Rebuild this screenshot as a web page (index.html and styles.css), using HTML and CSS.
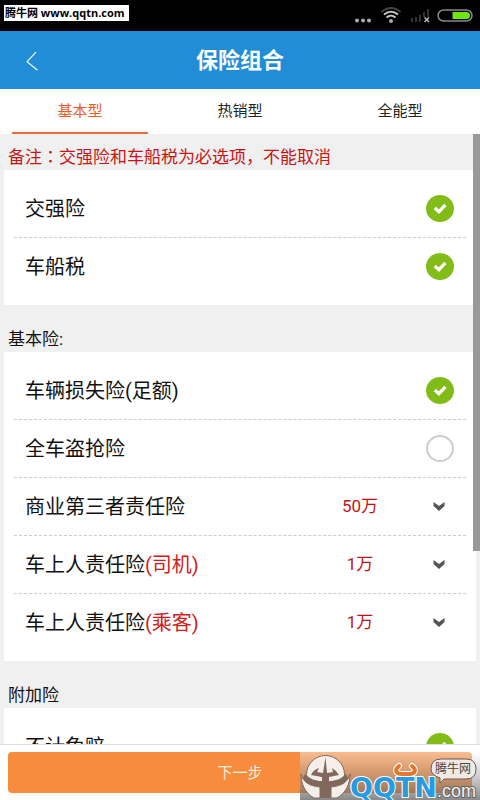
FILE: index.html
```html
<!DOCTYPE html>
<html lang="zh-CN">
<head>
<meta charset="utf-8">
<meta name="viewport" content="width=device-width, initial-scale=1">
<title>保险组合</title>
<link rel="stylesheet" href="styles.css">
</head>
<body>
<svg class="defs" width="0" height="0" aria-hidden="true">
  <symbol id="tick" viewBox="0 0 28 28"><path d="M8.600 13.500 12.900 17.300 19.600 10.300" fill="none" stroke="#fff" stroke-width="3.400"/></symbol>
  <symbol id="chevron" viewBox="0 0 12 10"><path d="M.5 0 6 4 11.500 0V4L6 9 .5 4Z" fill="#555"/></symbol>
</svg>
<div class="statusbar">
  <span class="source">腾牛网 www.qqtn.com</span>
  <svg class="status-icons" width="120" height="24" viewBox="0 0 120 24" aria-hidden="true">
    <g fill="#aaa"><circle cx="2" cy="15.500" r="2"/><circle cx="8" cy="15.500" r="2"/><circle cx="14" cy="15.500" r="2"/><circle cx="36" cy="16" r="2"/></g>
    <g fill="none" stroke="#ccc" stroke-width="1.800"><path d="M31.500 12.500Q36 8.700 40.500 12.500"/><path d="M29 9.500Q36 3.700 43 9.500"/><path d="M26.500 7Q36-1 45.500 7" stroke="#444"/></g>
    <path d="M56 13h2v4h-2zM60 12h2v5h-2zM64 10h2v7h-2zM68 7h2v5h-2zM72 4h2v8h-2z" fill="#333"/>
    <path d="m69.500 12.500 4.500 4.500m0-4.500L69.500 17" stroke="#bbb" stroke-width="1.500"/>
    <rect x="83" y="5" width="34" height="11" rx="5.500" fill="none" stroke="#888" stroke-width="1.500"/>
    <path d="M97.500 7h14a3.500 3.500 0 0 1 0 7h-14z" fill="#6de614"/>
  </svg>
</div>
<header class="titlebar">
  <a class="back" href="#" aria-label="返回"><svg width="12" height="20" viewBox="0 0 12 20"><path d="M10 1.200 1 10.700l10.500 8.600" fill="none" stroke="#fff" stroke-width="1.100"/></svg></a>
  <h1>保险组合</h1>
</header>
<nav class="tabs">
  <a class="tab active" href="#">基本型</a>
  <a class="tab" href="#">热销型</a>
  <a class="tab" href="#">全能型</a>
</nav>
<main class="content">
  <p class="heading note">备注<span class="colon" lang="zh-TW">：</span>交强险和车船税为必选项，不能取消</p>
  <section class="card">
    <div class="row"><label for="c1">交强险</label><span class="check"><input type="checkbox" id="c1" checked><svg><use href="#tick"/></svg></span></div>
    <div class="row"><label for="c2">车船税</label><span class="check"><input type="checkbox" id="c2" checked><svg><use href="#tick"/></svg></span></div>
  </section>
  <h2 class="heading">基本险:</h2>
  <section class="card">
    <div class="row"><label for="c3">车辆损失险(足额)</label><span class="check"><input type="checkbox" id="c3" checked><svg><use href="#tick"/></svg></span></div>
    <div class="row"><label for="c4">全车盗抢险</label><span class="check"><input type="checkbox" id="c4"><svg><use href="#tick"/></svg></span></div>
    <div class="row"><label for="s1">商业第三者责任险</label><span class="amount"><select id="s1"><option>50万</option></select><svg><use href="#chevron"/></svg></span></div>
    <div class="row"><label for="s2">车上人责任险<em>(司机)</em></label><span class="amount"><select id="s2"><option>1万</option></select><svg><use href="#chevron"/></svg></span></div>
    <div class="row"><label for="s3">车上人责任险<em>(乘客)</em></label><span class="amount"><select id="s3"><option>1万</option></select><svg><use href="#chevron"/></svg></span></div>
  </section>
  <h2 class="heading">附加险</h2>
  <section class="card">
    <div class="row"><label for="c5">不计免赔</label><span class="check"><input type="checkbox" id="c5" checked><svg><use href="#tick"/></svg></span></div>
  </section>
  <div class="scrollbar"></div>
</main>
<footer class="actions">
  <button type="button">下一步</button>
  <svg class="watermark" width="180" height="48" viewBox="0 0 180 48" aria-hidden="true">
    <defs>
      <linearGradient id="shade" x1="0" y1="0" x2="0" y2="1"><stop offset="0" stop-color="#fff" stop-opacity=".42"/><stop offset=".4" stop-color="#aaa" stop-opacity=".45"/><stop offset="1" stop-color="#555" stop-opacity=".7"/></linearGradient>
    </defs>
    <path d="M0 0h180v48H0z" fill="url(#shade)"/>
    <circle cx="25.500" cy="22.500" r="19" fill="#f6eee9" stroke="#80685c"/>
    <path d="M5 22c5 5 11 7 16 7h9c5 0 11-2 16-7l2 4c-3 6-8 8-17 9v11H20V35C11 34 6 32 3 26Z" fill="#80685c"/>
    <path d="M1 22c2 8 8 12 19 13v11h-6C5 41 1 32 1 22ZM50 22c-2 8-8 12-19 13v11h6c9-5 13-14 13-24Z" fill="#f6eee9" stroke="#80685c"/>
    <path d="m25.500 5 1.500 16 6-1-1-4q5 3 7 7l-10 2v5h-7v-5l-11-2q2-5 8-7l-2 4 6 1Z" fill="#80685c"/>
    <g fill="none" stroke-linecap="round" transform="translate(-1 -3)"><path d="M100 17c-5 4-3 8 3 8h7c6 0 8-4 3-8" stroke="#fff" stroke-width="6"/><path d="M100 17c-5 4-3 8 3 8h7c6 0 8-4 3-8" stroke="#e8762a" stroke-width="4"/></g>
    <text class="wm-name" x="50" y="45">QQTN</text>
    <text class="wm-com" x="137" y="45">.com</text>
    <path d="M141 7h25q10 0 10 10t-10 10h-22l-4 4v-5q-9-3-9-9 0-10 10-10Z" fill="#f2e9e4" stroke="#6b5b54"/>
    <text class="wm-cn" x="135" y="21">腾牛网</text>
  </svg>
</footer>
</body>
</html>
```
FILE: styles.css
```css
* { box-sizing: border-box; }
body {
  margin: 0;
  height: 100vh;
  display: flex;
  flex-direction: column;
  overflow: hidden;
  background: #fff;
  color: #111;
  font-family: Roboto, "Noto Sans CJK SC", sans-serif;
}
.defs { position: absolute; }
a { color: inherit; text-decoration: none; }
.statusbar {
  flex: none;
  height: 31px;
  padding: 5px 5px 0 4px;
  display: flex;
  justify-content: space-between;
  align-items: flex-start;
  background: #000;
}
.source {
  height: 16px;
  padding: 0 4px 0 1px;
  background: #fff;
  color: #000;
  font: bold 11px/16px "Open Sans", "Noto Sans CJK SC", sans-serif;
}
.titlebar {
  flex: none;
  height: 58px;
  padding-top: 2px;
  display: grid;
  grid-template-columns: 60px 1fr 60px;
  align-items: center;
  background: #218dd6;
  color: #fff;
}
.back { padding-left: 26px; display: flex; }
h1 { margin: 0; text-align: center; font-size: 22px; line-height: 32px; font-weight: 700; }
.tabs {
  flex: none;
  height: 45px;
  padding: 0 12px;
  display: grid;
  grid-template-columns: repeat(3, 136px);
  justify-content: space-between;
}
.tab { padding-top: 10px; text-align: center; font-size: 15px; line-height: 24px; color: #222; }
.tab.active { color: #ee5a24; border-bottom: 2px solid #ee6b3b; }
.content {
  position: relative;
  flex: 1;
  min-height: 0;
  overflow: hidden;
  padding: 10px 4px 0;
  background: #f0f0f0;
}
.heading { margin: 0; padding-left: 4px; font-size: 17px; line-height: 26px; font-weight: 400; }
.note { color: #c81414; }
.colon { font-family: "Noto Sans CJK TC", sans-serif; line-height: 1; }
.card { margin-bottom: 21px; padding: 10px; background: #fff; }
.row {
  height: 58px;
  padding: 0 12px 0 11px;
  display: flex;
  align-items: center;
  justify-content: space-between;
  border-bottom: 1px dashed #ccc;
}
.row:last-child { height: 57px; border-bottom: 0; }
.row label { padding-top: 1px; font-size: 20px; line-height: 30px; }
em { font-style: normal; color: #d0201c; }
.check { display: grid; }
.check input, .check svg { grid-area: 1 / 1; width: 28px; height: 27px; margin: 0; }
.check input { appearance: none; border: 2px solid #ccc; border-radius: 50%; }
.check input:checked { border: 0; background: #82bc19; }
.check svg { pointer-events: none; visibility: hidden; }
.check input:checked + svg { visibility: visible; }
.amount { display: grid; align-items: center; }
.amount select, .amount svg { grid-area: 1 / 1; }
.amount select {
  appearance: none;
  width: 134px;
  height: 38px;
  padding: 0 54px 2px 0;
  border: 0;
  background: none;
  color: #bd1515;
  font: 17px/26px Roboto, "Noto Sans CJK SC", sans-serif;
  text-align: center;
  text-align-last: center;
}
.amount svg { justify-self: end; width: 12px; height: 10px; margin-right: 9px; pointer-events: none; }
.scrollbar {
  position: absolute;
  top: 0;
  right: 0;
  width: 7px;
  height: 417px;
  background: #999;
}
.actions {
  position: relative;
  flex: none;
  padding: 7px 8px;
  background: #fff;
  border-top: 1px solid #ddd;
}
.actions button {
  display: block;
  width: 100%;
  height: 41px;
  border: 0;
  border-radius: 4px;
  background: #f78c3e;
  color: #fff0dc;
  font: 15px/24px Roboto, "Noto Sans CJK SC", sans-serif;
}
.watermark { position: absolute; right: 0; bottom: 0; pointer-events: none; }
.wm-name { font: bold 27px "DejaVu Sans", sans-serif; fill: #269bdf; stroke: #fff; stroke-width: 2px; paint-order: stroke; }
.wm-com { font: 18px "Liberation Sans", sans-serif; fill: #f2f2f2; stroke: #666; stroke-width: 2px; paint-order: stroke; }
.wm-cn { font: 12px "Noto Sans CJK SC", sans-serif; fill: #4d4440; }
```
